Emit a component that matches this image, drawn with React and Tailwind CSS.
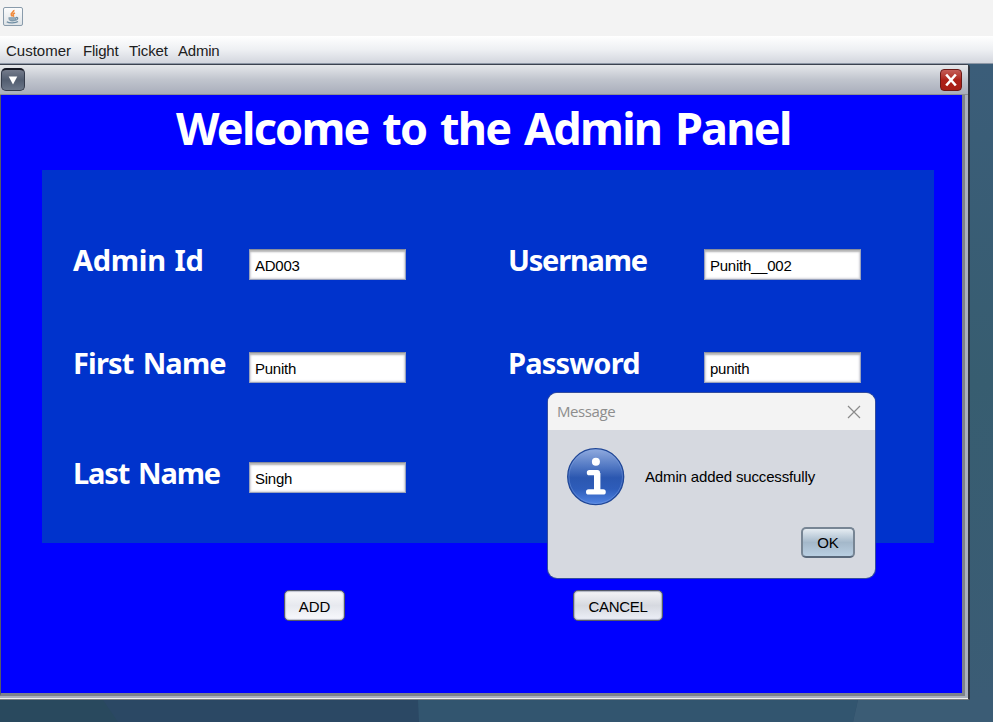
import React from "react";

const labelFont = "font-['Noto_Sans','Open_Sans',sans-serif] font-bold text-white whitespace-nowrap";

function Field({ label, value, spacing, gap }) {
  return (
    <div className={"flex h-[31px] items-start " + gap}>
      <div className={`${labelFont} -ml-px w-full text-[29px] leading-[21px] ${spacing}`}>{label}</div>
      <input
        readOnly
        value={value}
        className="h-[31px] w-[157px] shrink-0 border border-[#9aa3bd] border-t-[#8a8e9c] bg-white pt-px pl-[5px] text-[15px] tracking-[-0.25px] text-black outline-none shadow-[inset_0_3px_2px_-1px_#b5b5b5,inset_0_0_2px_1px_#d6d6dc]"
      />
    </div>
  );
}

function JavaIcon() {
  return (
    <svg width="20" height="20" viewBox="0 0 20 20">
      <defs>
        <linearGradient id="jbg" x1="0" y1="0" x2="0" y2="1">
          <stop offset="0" stopColor="#fdfdfd" />
          <stop offset="1" stopColor="#dde2e6" />
        </linearGradient>
      </defs>
      <rect x="0.5" y="0.5" width="19" height="18" rx="1.5" fill="url(#jbg)" stroke="#899bab" />
      <path d="M10.8 3c.7 2-3.6 3-2.5 5 .3.6.9 1 1.1 1.5M12 6c-2 .7-2.4 1.5-1.6 2.4.5.6.1 1-.3 1.4" fill="none" stroke="#ef8a3c" strokeWidth="1.6" />
      <path d="M5.5 10.3h7.7v1.2c0 2-1.2 3-3.8 3s-3.9-1.4-3.9-3z" fill="#819aac" />
      <path d="M13 10.6c2-.5 2.8 1.6-.6 2.7M3.8 14.8c2 1.6 9 1.5 11.2-.2" fill="none" stroke="#6f8da3" strokeWidth="1.3" />
      <path d="M6.5 12h5.5" stroke="#c5d2dc" strokeWidth=".6" />
    </svg>
  );
}

function InfoIcon() {
  return (
    <svg width="58" height="58" viewBox="0 0 58 58">
      <defs>
        <linearGradient id="info" x1="0" y1="0" x2="0" y2="1">
          <stop offset="0" stopColor="#91abde" />
          <stop offset=".3" stopColor="#557bc5" />
          <stop offset=".52" stopColor="#2b57b0" />
          <stop offset=".72" stopColor="#2e5dba" />
          <stop offset="1" stopColor="#5285e4" />
        </linearGradient>
      </defs>
      <circle cx="28.7" cy="28.7" r="28" fill="url(#info)" stroke="#204797" strokeWidth="1.3" />
      <circle cx="28.7" cy="28.7" r="26.8" fill="none" stroke="#83a5e6" strokeOpacity=".4" />
      <circle cx="28.9" cy="13.8" r="4" fill="#fff" />
      <path d="M22.4 24.7h8v19M21.6 43.9h14.6" fill="none" stroke="#fff" strokeWidth="5.2" strokeLinecap="round" strokeLinejoin="round" />
      <path d="M30.2 25v18" stroke="#fff" strokeWidth="6.4" />
    </svg>
  );
}

export default function App() {
  return (
    <div className="relative flex h-[722px] w-[993px] flex-col overflow-hidden bg-[#3a5c74] font-['Liberation_Sans',Arial,sans-serif] text-[15px] text-black">
      <header className="h-9 shrink-0 bg-[#f3f3f3] pt-[7px] pl-[3px]">
        <JavaIcon />
      </header>
      <nav className="flex h-7 shrink-0 items-center border-b border-[#8d97a6] bg-linear-to-b from-white via-[#eef0f3] to-[#d3d6de] pt-px pl-[6px] leading-none text-[#202020]">
        <span className="w-[77px]">Customer</span>
        <span className="w-[46px] tracking-[-0.2px]">Flight</span>
        <span className="w-[49px] tracking-[-0.1px]">Ticket</span>
        <span className="tracking-[-0.2px]">Admin</span>
      </nav>

      <div className="flex h-[636px] shrink-0">
        <section className="flex w-[970px] shrink-0 flex-col rounded-tr-[4px] border-t border-r-2 border-b border-t-[#3c424f] border-r-[#303640] border-b-[#7e8082] bg-[#abb0bd]">
          <div className="flex h-[30px] shrink-0 items-center justify-between border-b border-[#8c8e94] bg-linear-to-b from-[#e6e8eb] via-[#c1c5ce] to-[#a9aebb] pr-[6px] pl-[1px]">
            <button className="flex h-[23px] w-6 items-center justify-center rounded-[5px] border border-t-2 border-[#343b4b] border-t-[#151722] bg-linear-to-b from-[#747b8b] via-[#525d70] to-[#6c7789]">
              <svg width="10" height="9" viewBox="0 0 10 9"><path d="M.7.5h8.6L5 8.5z" fill="#fff" /></svg>
            </button>
            <button className="flex h-[22px] w-[22px] items-center justify-center rounded-[4px] border border-[#6b1917] bg-linear-to-b from-[#c45d57] via-[#ad2017] to-[#a81e15]">
              <svg className="shrink-0" width="14" height="14" viewBox="0 0 14 14"><path d="M2.2 1.5l9.6 11M11.8 1.5l-9.6 11" stroke="#fff" strokeWidth="2.6" /></svg>
            </button>
          </div>

          <div className="mr-[3px] flex h-[601px] shrink-0 flex-col border-r-[3px] border-b-[3px] border-l border-r-[#7e828b] border-b-[#7e828b] border-l-[#55596a] bg-[#0000ff]">
            <h1 className={`${labelFont} ml-[175px] h-[75px] text-[45px] leading-[65px] tracking-[-1.75px] [word-spacing:3.6px]`}>Welcome to the Admin Panel</h1>
            <main className="ml-[41px] grid h-[373px] w-[892px] shrink-0 grid-cols-[332px_352px] content-start gap-x-[103px] bg-[#0033cc] pt-[79px] pl-8">
              <Field label="Admin Id" value="AD003" spacing="tracking-[-0.3px] [word-spacing:1.5px]" gap="mb-[72px]" />
              <Field label="Username" value="Punith__002" spacing="tracking-[-1.2px]" gap="mb-[72px]" />
              <Field label="First Name" value="Punith" spacing="tracking-[-0.85px] [word-spacing:2.5px]" gap="mb-[79px]" />
              <Field label="Password" value="punith" spacing="tracking-[-0.8px]" gap="mb-[79px]" />
              <Field label="Last Name" value="Singh" spacing="tracking-[-1.15px] [word-spacing:2.5px]" gap="" />
            </main>
            <div className="flex pt-[47px] pl-[283px]">
              <button className="mr-[228px] h-[31px] w-[61px] rounded-[5px] border border-[#555b69] bg-linear-to-b from-[#fafafb] via-[#e7e9ef] to-[#f8f9fd] pt-[3px] tracking-[-0.1px] shadow-[inset_0_0_1px_1px_#bfc3d0]">ADD</button>
              <button className="h-[31px] w-[90px] rounded-[5px] border border-[#555b69] bg-linear-to-b from-[#f5f5f7] via-[#d6d9e0] to-[#edf0f8] pt-[3px] tracking-[-0.3px] shadow-[inset_0_0_1px_1px_#afb3c0]">CANCEL</button>
            </div>
          </div>
          <div className="mt-[2px] h-px shrink-0 bg-[#f1f1f1]" />
        </section>
        <div className="flex-1 bg-linear-to-b from-[#3b5d79] via-[#375d70] to-[#3b5c75]" />
      </div>
      <svg className="shrink-0" width="993" height="22">
        <rect width="993" height="22" fill="#2b4864" />
        <path d="M0 0h103l15 22H0z" fill="#29495e" />
        <path d="M418 0h440l-5 22H419z" fill="#32556f" />
        <path d="M858 0h135v22H853z" fill="#3b5c75" />
      </svg>

      <aside className="absolute top-[393px] left-[548px] flex h-[185px] w-[327px] flex-col overflow-hidden rounded-[9px] bg-[#d6d9e0] shadow-[0_0_0_1px_#344d9d]">
        <div className="flex h-[37px] shrink-0 items-center justify-between bg-[#f3f3f3] pr-[14px] pl-[9px] font-['Open_Sans','Noto_Sans',sans-serif] text-[15px] tracking-[-0.4px] text-[#8d8d8d]">
          <span>Message</span>
          <svg width="14" height="14" viewBox="0 0 14 14"><path d="M1 1l12 12M13 1L1 13" stroke="#8a8a8a" strokeWidth="1.2" /></svg>
        </div>
        <div className="flex h-[94px] items-center gap-5 pl-[19px]">
          <InfoIcon />
          <span className="tracking-[-0.14px]">Admin added successfully</span>
        </div>
        <button className="mt-[3px] ml-[253px] h-[31px] w-[54px] rounded-[5px] border-2 border-[#778594] border-b-[#59687a] bg-linear-to-b from-[#e5ecf2] via-[#a4b8ca] to-[#b9cfe2] pt-px">OK</button>
      </aside>
    </div>
  );
}
